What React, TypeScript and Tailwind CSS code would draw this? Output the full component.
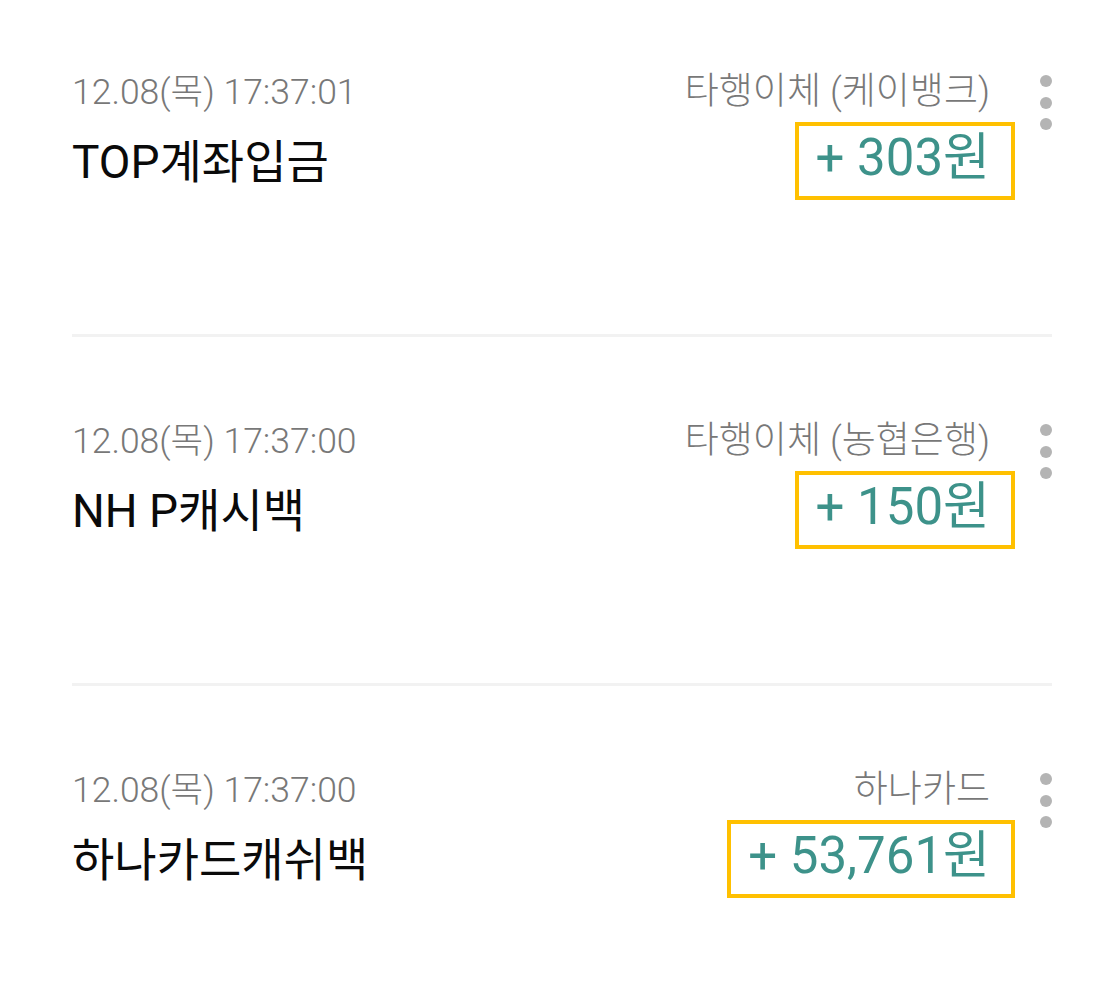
import React from 'react';

type Tx = {
  date: string;
  title: string;
  source: string;
  amount: string;
};

const items: Tx[] = [
  { date: '12.08(목) 17:37:01', title: 'TOP계좌입금', source: '타행이체 (케이뱅크)', amount: '+ 303원' },
  { date: '12.08(목) 17:37:00', title: 'NH P캐시백', source: '타행이체 (농협은행)', amount: '+ 150원' },
  { date: '12.08(목) 17:37:00', title: '하나카드캐쉬백', source: '하나카드', amount: '+ 53,761원' },
];

function MoreDots() {
  return (
    <div className="flex flex-col items-center gap-[9.5px] pt-[5px]">
      <span className="block w-3 h-3 rounded-full bg-[#b4b4b4]" />
      <span className="block w-3 h-3 rounded-full bg-[#b4b4b4]" />
      <span className="block w-3 h-3 rounded-full bg-[#b4b4b4]" />
    </div>
  );
}

function Row({ tx, first, last }: { tx: Tx; first: boolean; last: boolean }) {
  return (
    <div
      className={
        (first ? 'h-[337px] pt-[70px] ' : 'h-[349px] pt-[82px] ') +
        (last ? '' : 'border-b-[3px] border-[#f2f2f2]')
      }
    >
      <div className="flex items-start">
        <div className="flex-1 flex flex-col">
          <div className="text-[35.5px] leading-[44px] font-light text-[#787878]">{tx.date}</div>
          <div className="mt-[20px] text-[46px] leading-[57px] text-[#0a0a0a]">{tx.title}</div>
        </div>
        <div className="flex flex-col items-end">
          <div className="text-[37px] leading-[44px] font-light text-[#787878]">{tx.source}</div>
          <div className="mt-[8px] -mr-[25px] border-4 border-[#ffc000] pl-[17px] pr-[21px] pb-[6px] text-[51px] leading-[64px] text-[#3d928a]">
            {tx.amount}
          </div>
        </div>
        <div className="w-[62px] flex justify-end">
          <MoreDots />
        </div>
      </div>
    </div>
  );
}

export default function App() {
  return (
    <div
      className="w-[1114px] h-[996px] bg-white pl-[72px] pr-[62px] overflow-hidden"
      style={{ fontFamily: 'Roboto, "Noto Sans CJK KR", sans-serif' }}
    >
      {items.map((tx, i) => (
        <Row key={i} tx={tx} first={i === 0} last={i === items.length - 1} />
      ))}
    </div>
  );
}
